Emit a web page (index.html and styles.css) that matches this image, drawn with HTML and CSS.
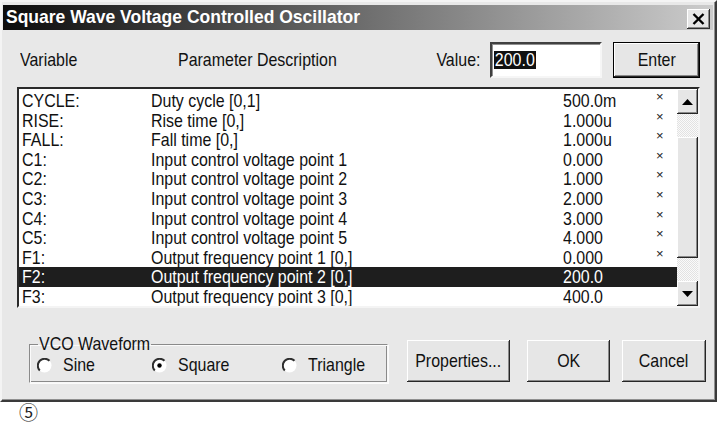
FILE: index.html
```html
<!DOCTYPE html>
<html>
<head>
<meta charset="utf-8">
<link rel="stylesheet" href="styles.css">
</head>
<body>
<div class="window">
  <div class="titlebar">
    <span class="title">Square Wave Voltage Controlled Oscillator</span>
    <div class="close">
      <svg width="13" height="12" viewBox="0 0 13 12"><path d="M1.5 1 L11.5 11 M11.5 1 L1.5 11" stroke="#000" stroke-width="2.4" fill="none"/></svg>
    </div>
  </div>
  <div class="header">
    <span class="h-var">Variable</span>
    <span class="h-desc">Parameter Description</span>
    <span class="h-value">Value:</span>
    <div class="input"><span class="sel">200.0</span></div>
    <div class="btn default enter"><span>Enter</span></div>
  </div>
  <div class="list">
    <div class="rows">
      <div class="row"><span>CYCLE:</span><span>Duty cycle [0,1]</span><span>500.0m</span><i class="mark">×</i></div>
      <div class="row"><span>RISE:</span><span>Rise time [0,]</span><span>1.000u</span><i class="mark">×</i></div>
      <div class="row"><span>FALL:</span><span>Fall time [0,]</span><span>1.000u</span><i class="mark">×</i></div>
      <div class="row"><span>C1:</span><span>Input control voltage point 1</span><span>0.000</span><i class="mark">×</i></div>
      <div class="row"><span>C2:</span><span>Input control voltage point 2</span><span>1.000</span><i class="mark">×</i></div>
      <div class="row"><span>C3:</span><span>Input control voltage point 3</span><span>2.000</span><i class="mark">×</i></div>
      <div class="row"><span>C4:</span><span>Input control voltage point 4</span><span>3.000</span><i class="mark">×</i></div>
      <div class="row"><span>C5:</span><span>Input control voltage point 5</span><span>4.000</span><i class="mark">×</i></div>
      <div class="row"><span>F1:</span><span>Output frequency point 1 [0,]</span><span>0.000</span><i class="mark">×</i></div>
      <div class="row selected"><span>F2:</span><span>Output frequency point 2 [0,]</span><span>200.0</span><i class="mark"></i></div>
      <div class="row"><span>F3:</span><span>Output frequency point 3 [0,]</span><span>400.0</span><i class="mark"></i></div>
    </div>
    <div class="scrollbar">
      <div class="sb-btn"><svg width="11" height="6" viewBox="0 0 11 6"><path d="M5.5 0 L11 6 L0 6 Z" fill="#000"/></svg></div>
      <div class="track"><div class="thumb"></div></div>
      <div class="sb-btn"><svg width="11" height="6" viewBox="0 0 11 6"><path d="M0 0 L11 0 L5.5 6 Z" fill="#000"/></svg></div>
    </div>
  </div>
  <div class="bottom">
    <fieldset class="group">
      <legend><span>VCO Waveform</span></legend>
      <div class="radios">
        <div class="radio">
          <svg width="15" height="15" viewBox="0 0 15 15"><circle cx="7.5" cy="7.5" r="7" fill="#fff"/><path d="M12.5 2.8 A6.6 6.6 0 0 0 2.8 12.5" stroke="#2e2e2e" stroke-width="2" fill="none"/></svg>
          <span>Sine</span>
        </div>
        <div class="radio">
          <svg width="15" height="15" viewBox="0 0 15 15"><circle cx="7.5" cy="7.5" r="7" fill="#fff"/><path d="M12.5 2.8 A6.6 6.6 0 0 0 2.8 12.5" stroke="#2e2e2e" stroke-width="2" fill="none"/><circle cx="7.5" cy="7.5" r="2.2" fill="#000"/></svg>
          <span>Square</span>
        </div>
        <div class="radio">
          <svg width="15" height="15" viewBox="0 0 15 15"><circle cx="7.5" cy="7.5" r="7" fill="#fff"/><path d="M12.5 2.8 A6.6 6.6 0 0 0 2.8 12.5" stroke="#2e2e2e" stroke-width="2" fill="none"/></svg>
          <span>Triangle</span>
        </div>
      </div>
    </fieldset>
    <div class="btn props"><span>Properties...</span></div>
    <div class="btn ok"><span>OK</span></div>
    <div class="btn cancel"><span>Cancel</span></div>
  </div>
</div>
<div class="note">⑤</div>
</body>
</html>
```
FILE: styles.css
```css
html, body {
  margin: 0;
  padding: 0;
  background: #fff;
}
body {
  width: 717px;
  height: 425px;
  overflow: hidden;
  font-family: "Liberation Sans", Arial, sans-serif;
  font-size: 19px;
  color: #111;
}
.window {
  box-sizing: border-box;
  width: 717px;
  height: 402px;
  background: #e8e8e8;
  border: 2px solid;
  border-color: #f4f4f4 #3a3a3a #3a3a3a #f4f4f4;
  box-shadow: inset -1px -1px #909090;
  padding: 3px 2px 0 1px;
}
.titlebar {
  height: 25px;
  display: flex;
  align-items: center;
  justify-content: space-between;
  padding: 0 3px 0 3px;
  background: linear-gradient(to right, #0c0c0c, #cccccc);
}
.title {
  font-weight: bold;
  font-size: 17.5px;
  color: #fff;
  display: inline-block;
  transform: scaleY(1.06);
}
.close {
  box-sizing: border-box;
  width: 23px;
  height: 20px;
  background: #e6e6e6;
  display: flex;
  align-items: center;
  justify-content: center;
  box-shadow: inset -1px -1px #303030, inset 1px 1px #fff, inset -2px -2px #8a8a8a;
  align-self: flex-end;
  margin-bottom: 1px;
}
.header {
  margin-top: 12px;
  height: 36px;
  display: flex;
  align-items: center;
  padding: 0 13px 0 17px;
}
.header > span {
  display: inline-block;
  transform: scaleX(0.84);
  transform-origin: left center;
}
.h-var {
  width: 158px;
}
.h-desc {
  flex: 1;
}
.header > .h-value {
  margin-right: 10px;
  transform-origin: right center;
}
.input {
  box-sizing: border-box;
  width: 112px;
  height: 36px;
  background: #fff;
  border: 2px solid;
  border-color: #404040 #f6f6f6 #f6f6f6 #404040;
  box-shadow: inset 1px 1px #909090;
  display: flex;
  align-items: center;
  padding-left: 2px;
}
.sel {
  display: inline-block;
  background: #111;
  color: #fff;
  line-height: 18px;
  padding: 0 1px;
  transform: scaleX(0.84);
  transform-origin: left center;
}
.btn {
  box-sizing: border-box;
  display: flex;
  align-items: center;
  justify-content: center;
  background: #e6e6e6;
  box-shadow: inset -1px -1px #262626, inset 1px 1px #fff, inset -2px -2px #8a8a8a;
}
.btn span {
  display: inline-block;
  transform: scaleX(0.84);
  transform-origin: center;
}
.btn.default {
  border: 1px solid #000;
}
.enter {
  width: 87px;
  height: 36px;
  margin-left: 11px;
}
.list {
  box-sizing: border-box;
  margin: 9px 13px 0 14px;
  height: 221px;
  border: 2px solid;
  border-color: #2a2a2a #f4f4f4 #f4f4f4 #2a2a2a;
  display: flex;
  background: #fff;
}
.rows {
  flex: 1;
  overflow: hidden;
  padding-top: 2px;
}
.row {
  display: grid;
  grid-template-columns: 129px 412px 93px 1fr;
  height: 19.6px;
  line-height: 19.6px;
  padding-left: 3px;
  white-space: nowrap;
}
.row span {
  transform: scaleX(0.84);
  transform-origin: left center;
}
.row.selected {
  background: #1e1e1e;
  color: #fff;
}
.mark {
  font-style: normal;
  font-size: 13px;
  line-height: 12px;
  color: #222;
}
.scrollbar {
  width: 21px;
  display: flex;
  flex-direction: column;
}
.sb-btn {
  box-sizing: border-box;
  height: 25px;
  display: flex;
  align-items: center;
  justify-content: center;
  background: #e6e6e6;
  box-shadow: inset -1px -1px #262626, inset 1px 1px #fff, inset -2px -2px #8a8a8a;
}
.track {
  flex: 1;
  background-color: #f2f2f2;
  background-image: repeating-conic-gradient(#e2e2e2 0 25%, #fafafa 0 50%);
  background-size: 2px 2px;
}
.thumb {
  margin-top: 23px;
  height: 121px;
  background: #e6e6e6;
  box-shadow: inset -1px -1px #262626, inset 1px 1px #fff, inset -2px -2px #8a8a8a;
}
.bottom {
  margin-top: 26px;
  display: flex;
  align-items: flex-start;
  padding-left: 26px;
}
.group {
  box-sizing: border-box;
  width: 359px;
  margin: 0;
  padding: 0 8px 6px 8px;
  border-style: solid;
  border-width: 1px;
  border-color: #8a8a8a #f8f8f8 #f8f8f8 #8a8a8a;
  box-shadow: 1px 1px #fbfbfb, inset 1px 1px #fbfbfb, inset -1px -1px #8a8a8a;
}
.group legend {
  padding: 0 1px;
  line-height: 20px;
}
.group legend span {
  display: inline-block;
  transform: scaleX(0.84);
  transform-origin: left center;
  margin-right: -21px;
}
.radios {
  display: grid;
  grid-template-columns: 115px 130px auto;
  height: 22px;
  align-items: center;
}
.radio {
  display: flex;
  align-items: center;
  gap: 11px;
  margin-left: -1px;
}
.radio svg {
  display: block;
  flex: none;
}
.radio span {
  display: inline-block;
  transform: scaleX(0.84);
  transform-origin: left center;
}
.props {
  width: 103px;
  height: 42px;
  margin: 6px 0 0 19px;
}
.ok {
  width: 83px;
  height: 42px;
  margin: 6px 0 0 17px;
}
.cancel {
  width: 84px;
  height: 42px;
  margin: 6px 0 0 12px;
}
.note {
  margin: 0 0 0 19px;
  font-family: "Noto Sans CJK JP", "DejaVu Sans", sans-serif;
  font-size: 19px;
  line-height: 20px;
  color: #222;
}
```
